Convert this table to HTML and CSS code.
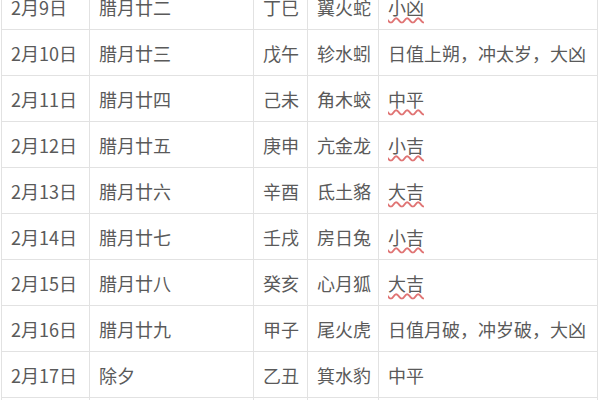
FILE: index.html
```html
<!DOCTYPE html>
<html lang="zh-CN">
<head>
<meta charset="utf-8">
<link rel="stylesheet" href="styles.css">
</head>
<body>
<table class="almanac">
  <colgroup>
    <col class="c-date"><col class="c-lunar"><col class="c-gz"><col class="c-star"><col class="c-note">
  </colgroup>
  <tbody>
    <tr><td>2月9日</td><td>腊月廿二</td><td>丁巳</td><td>翼火蛇</td><td><span class="spell">小凶</span></td></tr>
    <tr><td>2月10日</td><td>腊月廿三</td><td>戊午</td><td>轸水蚓</td><td>日值上朔，冲太岁，大凶</td></tr>
    <tr><td>2月11日</td><td>腊月廿四</td><td>己未</td><td>角木蛟</td><td><span class="spell">中平</span></td></tr>
    <tr><td>2月12日</td><td>腊月廿五</td><td>庚申</td><td>亢金龙</td><td><span class="spell">小吉</span></td></tr>
    <tr><td>2月13日</td><td>腊月廿六</td><td>辛酉</td><td>氐土貉</td><td><span class="spell">大吉</span></td></tr>
    <tr><td>2月14日</td><td>腊月廿七</td><td>壬戌</td><td>房日兔</td><td><span class="spell">小吉</span></td></tr>
    <tr><td>2月15日</td><td>腊月廿八</td><td>癸亥</td><td>心月狐</td><td><span class="spell">大吉</span></td></tr>
    <tr><td>2月16日</td><td>腊月廿九</td><td>甲子</td><td>尾火虎</td><td>日值月破，冲岁破，大凶</td></tr>
    <tr><td>2月17日</td><td>除夕</td><td>乙丑</td><td>箕水豹</td><td>中平</td></tr>
    <tr><td>&nbsp;</td><td></td><td></td><td></td><td></td></tr>
  </tbody>
</table>
</body>
</html>
```
FILE: styles.css
```css
html, body {
  margin: 0;
  padding: 0;
  background: #ffffff;
  overflow: hidden;
}
body {
  font-family: "Noto Sans CJK SC", "Noto Sans", sans-serif;
  color: #5a5a5a;
}
.almanac {
  border-collapse: collapse;
  table-layout: fixed;
  width: 597px;
  margin: -17px 0 0 1px;
  font-size: 18px;
}
.c-date { width: 88px; }
.c-lunar { width: 164px; }
.c-gz { width: 54px; }
.c-star { width: 71px; }
.c-note { width: 219px; }
.almanac tr { height: 46px; }
.almanac td {
  border: 1px solid #e2e2e2;
  padding: 0 0 0 9px;
  vertical-align: middle;
  white-space: nowrap;
  overflow: hidden;
  line-height: 22px;
}
.spell {
  text-decoration: underline wavy #e07474;
  text-decoration-thickness: 1.6px;
  text-underline-offset: 2px;
}
```
